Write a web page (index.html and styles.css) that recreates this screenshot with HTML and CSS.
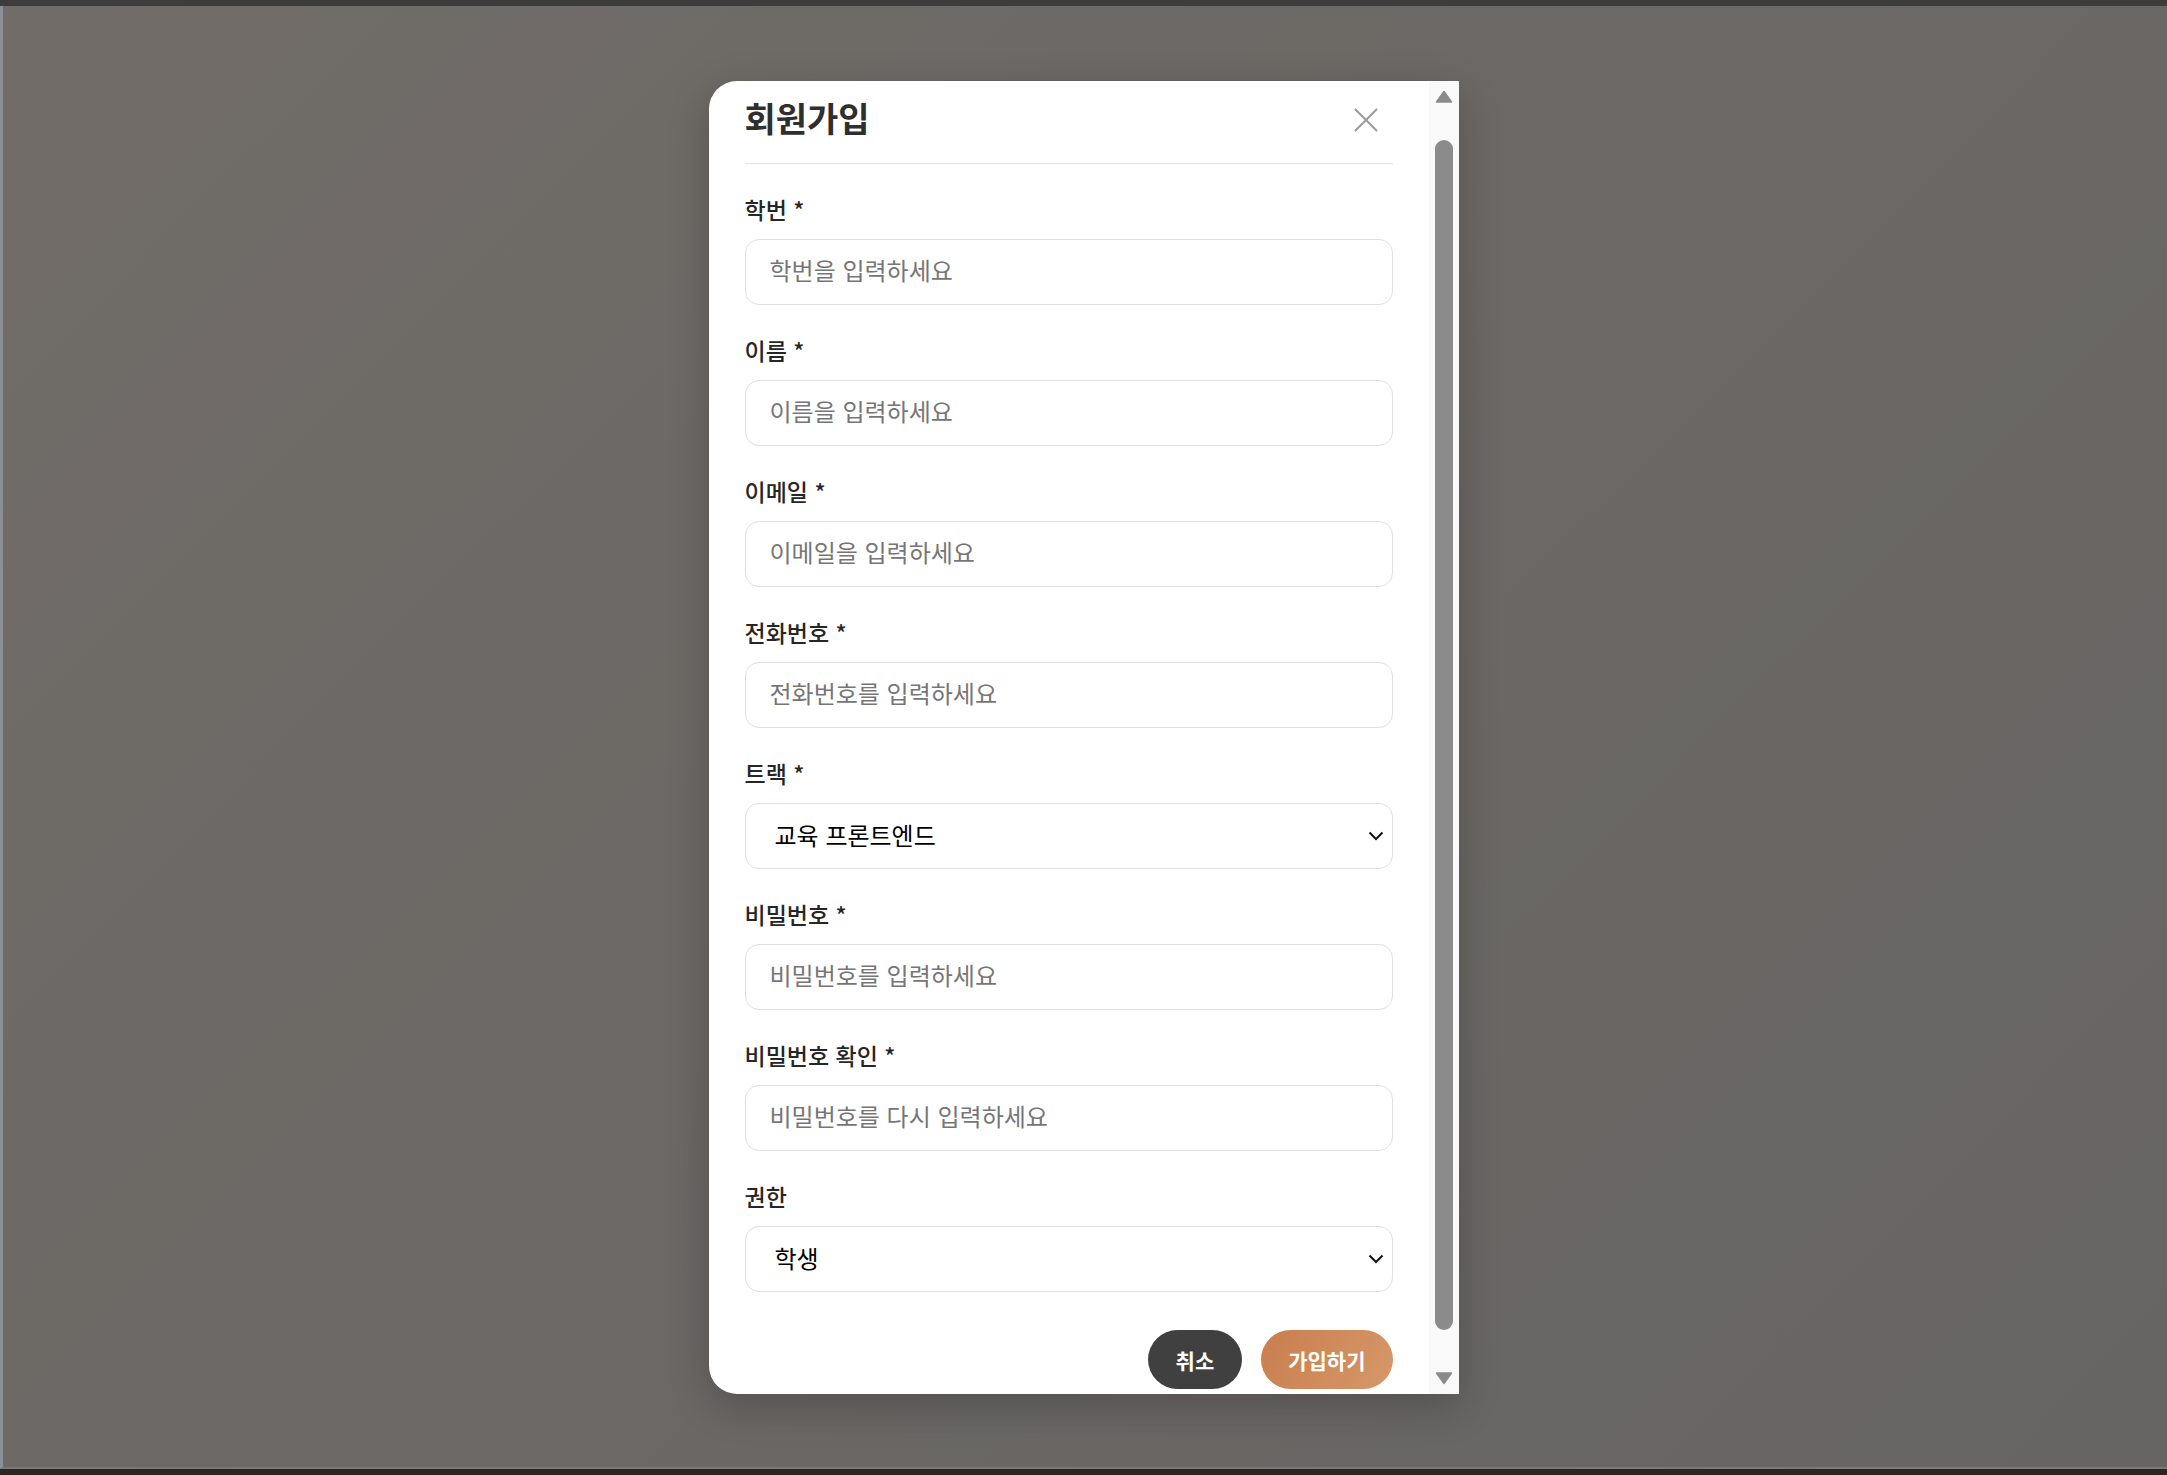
FILE: index.html
```html
<!DOCTYPE html>
<html lang="ko">
<head>
<meta charset="utf-8">
<title>회원가입</title>
<link rel="stylesheet" href="styles.css">
</head>
<body>
<div class="backdrop"></div>
<div class="overlay">
  <div class="modal">
    <div class="modal-body">
      <div class="modal-header">
        <h2 class="modal-title">회원가입</h2>
        <button class="close-btn" type="button" aria-label="닫기">
          <svg width="24" height="24" viewBox="0 0 24 24"><path d="M1 1 L23 23 M23 1 L1 23" stroke="#9a9a9a" stroke-width="2" fill="none"/></svg>
        </button>
      </div>
      <form class="form">
        <div class="field">
          <label class="label">학번 *</label>
          <input class="input" type="text" placeholder="학번을 입력하세요">
        </div>
        <div class="field">
          <label class="label">이름 *</label>
          <input class="input" type="text" placeholder="이름을 입력하세요">
        </div>
        <div class="field">
          <label class="label">이메일 *</label>
          <input class="input" type="email" placeholder="이메일을 입력하세요">
        </div>
        <div class="field">
          <label class="label">전화번호 *</label>
          <input class="input" type="tel" placeholder="전화번호를 입력하세요">
        </div>
        <div class="field">
          <label class="label">트랙 *</label>
          <div class="select-wrap">
            <select class="input select"><option>교육 프론트엔드</option></select>
            <svg class="chevron" width="16" height="10" viewBox="0 0 16 10"><path d="M1.5 1.5 L8 8 L14.5 1.5" stroke="#111" stroke-width="2" fill="none"/></svg>
          </div>
        </div>
        <div class="field">
          <label class="label">비밀번호 *</label>
          <input class="input" type="password" placeholder="비밀번호를 입력하세요">
        </div>
        <div class="field">
          <label class="label">비밀번호 확인 *</label>
          <input class="input" type="password" placeholder="비밀번호를 다시 입력하세요">
        </div>
        <div class="field">
          <label class="label">권한</label>
          <div class="select-wrap">
            <select class="input select"><option>학생</option></select>
            <svg class="chevron" width="16" height="10" viewBox="0 0 16 10"><path d="M1.5 1.5 L8 8 L14.5 1.5" stroke="#111" stroke-width="2" fill="none"/></svg>
          </div>
        </div>
        <div class="actions">
          <button class="btn btn-cancel" type="button">취소</button>
          <button class="btn btn-submit" type="submit">가입하기</button>
        </div>
      </form>
    </div>
    <div class="scrollbar" aria-hidden="true">
      <div class="sb-btn sb-up">
        <svg width="18" height="13" viewBox="0 0 18 13"><path d="M9 1.5 L16.5 12 L1.5 12 Z" fill="#8b8b8b" stroke="#8b8b8b" stroke-width="1.5" stroke-linejoin="round"/></svg>
      </div>
      <div class="sb-track"><div class="sb-thumb"></div></div>
      <div class="sb-btn sb-down">
        <svg width="18" height="13" viewBox="0 0 18 13"><path d="M1.5 1 L16.5 1 L9 11.5 Z" fill="#8b8b8b" stroke="#8b8b8b" stroke-width="1.5" stroke-linejoin="round"/></svg>
      </div>
    </div>
  </div>
</div>
<script src="script.js"></script>
</body>
</html>
```

FILE: styles.css
```css
html, body {
  margin: 0;
  height: 100%;
}
body {
  background: linear-gradient(to bottom, #3c3c3c 0, #3c3c3c 50%, #2b2621 50%, #2b2621 100%);
  font-family: "Noto Sans CJK KR", "Noto Sans", sans-serif;
  overflow: hidden;
}
.backdrop {
  position: fixed;
  top: 6px;
  left: 0;
  right: 0;
  bottom: 6px;
  background: linear-gradient(135deg, #716c68 0%, #6b6865 50%, #676564 100%);
  border-left: 3px solid #8b9096;
  border-bottom: 2px solid #787878;
}
.overlay {
  position: fixed;
  inset: 0;
  display: flex;
  align-items: center;
  justify-content: center;
}
.modal {
  width: 750px;
  height: 1313px;
  display: flex;
  background: #fff;
  border-radius: 28px 0 0 28px;
  overflow: hidden;
  box-shadow: 0 12px 40px rgba(0, 0, 0, 0.22);
}
.modal-body {
  flex: 1;
  min-width: 0;
  box-sizing: border-box;
  overflow-y: auto;
  scrollbar-width: none;
  padding: 49px 36px 36px;
}
.scrollbar {
  width: 30px;
  flex: none;
  display: flex;
  flex-direction: column;
  background: #f9f9f9;
}
.sb-btn {
  height: 30px;
  flex: none;
  display: flex;
  justify-content: center;
  box-sizing: border-box;
}
.sb-up {
  padding-top: 9px;
}
.sb-down {
  padding-top: 8px;
}
.sb-track {
  flex: 1;
  padding-top: 29px;
  display: flex;
  flex-direction: column;
  align-items: center;
}
.sb-thumb {
  width: 18px;
  height: 1190px;
  border-radius: 9px;
  background: #8b8b8b;
}
.modal-header {
  display: flex;
  align-items: center;
  justify-content: space-between;
  padding-bottom: 25px;
  border-bottom: 1px solid #e3e3e3;
  margin-bottom: 30px;
}
.modal-title {
  margin: 0;
  font-size: 34px;
  line-height: 40px;
  font-weight: 700;
  color: #2f2f2f;
}
.close-btn {
  width: 40px;
  height: 40px;
  box-sizing: border-box;
  padding: 3px 0 0;
  margin: 0 7px 0 0;
  border: 0;
  background: none;
  display: flex;
  align-items: center;
  justify-content: center;
}
.form {
  margin: 0;
}
.field {
  margin-bottom: 30px;
}
.label {
  display: block;
  font-size: 23px;
  line-height: 31px;
  font-weight: 500;
  color: #262626;
  margin-bottom: 14px;
}
.input {
  display: block;
  width: 100%;
  height: 66px;
  box-sizing: border-box;
  border: 1px solid #e0e0e0;
  border-radius: 14px;
  padding: 0 24px 5px;
  font-family: "Noto Sans CJK KR", "Noto Sans", sans-serif;
  font-size: 24px;
  color: #111;
  background: #fff;
  outline: none;
}
.input::placeholder {
  color: #767676;
}
.select-wrap {
  position: relative;
}
.select {
  appearance: none;
  -webkit-appearance: none;
  padding: 0 24px 3px 29px;
  color: #000;
}
.chevron {
  position: absolute;
  right: 9px;
  top: 50%;
  margin-top: -5px;
  pointer-events: none;
}
.actions {
  display: flex;
  justify-content: flex-end;
  gap: 19px;
  margin-top: 38px;
}
.btn {
  height: 59px;
  border: 0;
  border-radius: 30px;
  padding: 0 27px;
  font-family: "Noto Sans CJK KR", "Noto Sans", sans-serif;
  font-size: 21px;
  font-weight: 700;
  color: #fff;
}
.btn-cancel {
  background: #404040;
  padding: 0 28px;
}
.btn-submit {
  background: linear-gradient(120deg, #c97e4e 0%, #d69869 100%);
}
```

FILE: script.js
```js
document.querySelector('.modal-body').scrollTop = 32;
```
